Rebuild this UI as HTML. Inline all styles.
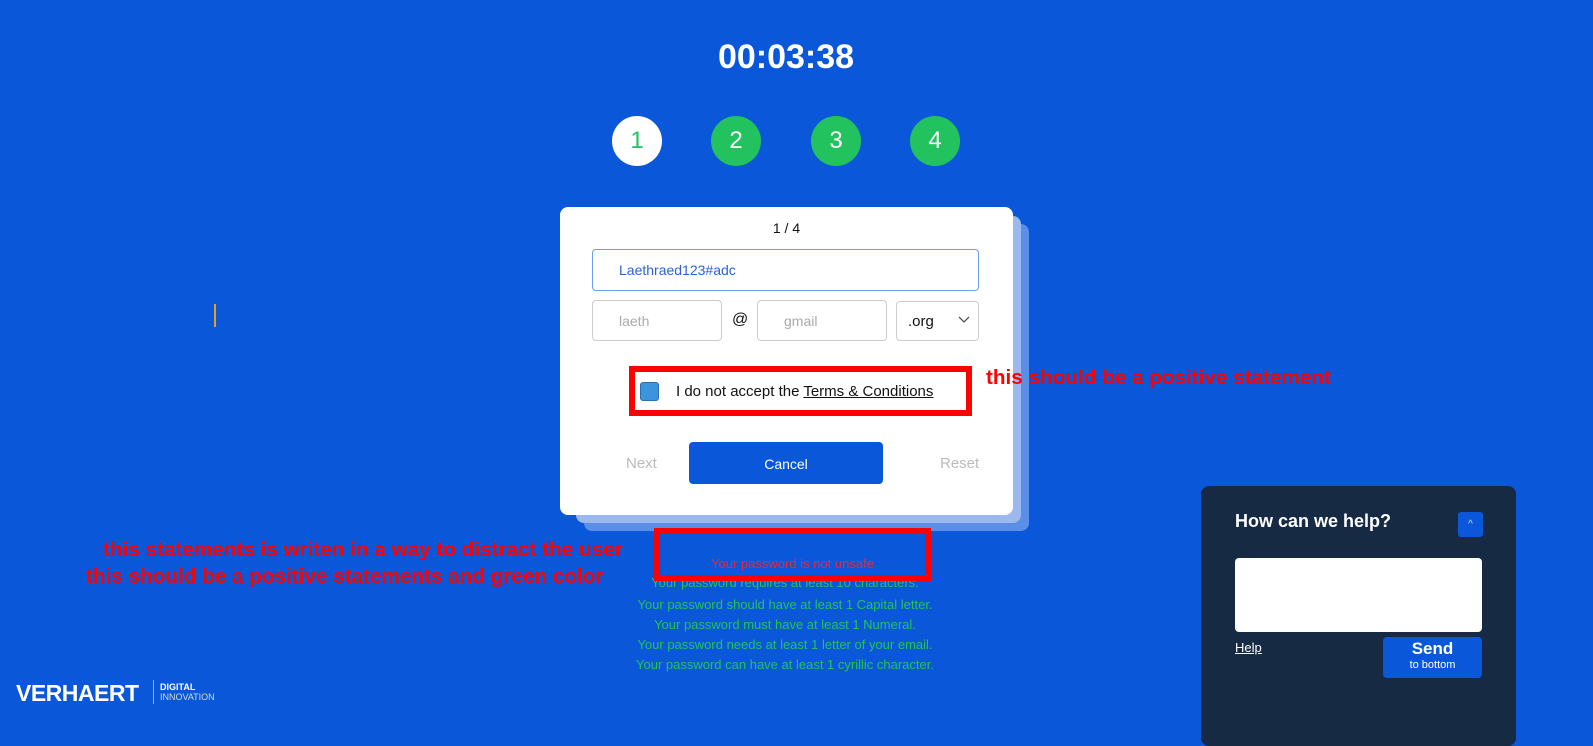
<!DOCTYPE html>
<html><head><meta charset="utf-8"><style>
*{margin:0;padding:0;box-sizing:border-box}
body{width:1593px;height:731px;background:#0b57d9;font-family:"Liberation Sans",Arial,sans-serif;position:relative;overflow:hidden}
.a{position:absolute}
.timer{left:0;width:1572px;top:38px;text-align:center;color:#fff;font-weight:bold;font-size:34px}
.c{width:50px;height:50px;border-radius:50%;background:#22c35e;color:#fff;font-size:24px;text-align:center;line-height:50px;top:116px}
.card{background:#fff;border-radius:8px}
.inp{border:1px solid #ccc;border-radius:4px;background:#fff;font-size:14px;color:#aaa}
.red{border:6px solid #f00}
.rt{color:#f00;font-weight:bold;font-size:20.7px}
.g{color:#22c35e;font-size:13px;text-align:center;width:400px;left:585px}
</style></head><body>
<div class="a timer">00:03:38</div>
<div class="a c" style="left:612px;background:#fff;color:#22c35e">1</div>
<div class="a c" style="left:711px">2</div>
<div class="a c" style="left:811px">3</div>
<div class="a c" style="left:910px">4</div>
<div class="a" style="left:214px;top:304px;width:2px;height:23px;background:#e0a030"></div>

<div class="a card" style="left:584px;top:224px;width:445px;height:307px;background:#5b8ee6"></div>
<div class="a card" style="left:576px;top:216px;width:445px;height:307px;background:#9bb9ee"></div>
<div class="a card" style="left:560px;top:207px;width:453px;height:308px"></div>
<div class="a" style="left:560px;width:453px;top:220px;text-align:center;font-size:14px;color:#111">1 / 4</div>
<div class="a inp" style="left:592px;top:249px;width:387px;height:42px;border:1px solid #6c9ef0;color:#2a62d6;padding:12px 0 0 26px">Laethraed123#adc</div>
<div class="a inp" style="left:592px;top:300px;width:130px;height:41px;padding:12px 0 0 26px">laeth</div>
<div class="a" style="left:732px;top:311px;font-size:16px;color:#111">@</div>
<div class="a inp" style="left:757px;top:300px;width:130px;height:41px;padding:12px 0 0 26px">gmail</div>
<div class="a inp" style="left:896px;top:301px;width:83px;height:40px;padding:11px 0 0 11px;color:#111;font-size:15px">.org
<svg class="a" style="left:61px;top:14px" width="12" height="8" viewBox="0 0 12 8"><path d="M1 1l5 5 5-5" fill="none" stroke="#555" stroke-width="1.3"/></svg></div>
<div class="a red" style="left:629px;top:366px;width:343px;height:50px"></div>
<div class="a" style="left:640px;top:382px;width:19px;height:19px;background:#3a95dd;border:1px solid #2a70b0;border-radius:3px"></div>
<div class="a" style="left:676px;top:383px;font-size:15px;color:#111">I do not accept the <u>Terms &amp; Conditions</u></div>
<div class="a rt" style="left:986px;top:366px">this should be a positive statement</div>
<div class="a" style="left:626px;top:455px;font-size:15px;color:#bbb">Next</div>
<div class="a" style="left:689px;top:442px;width:194px;height:42px;background:#0b57d9;border-radius:4px;color:#fff;font-size:14px;text-align:center;line-height:44px">Cancel</div>
<div class="a" style="left:940px;top:455px;font-size:15px;color:#bbb">Reset</div>

<div class="a rt" style="left:103px;top:538px">this statements is writen in a way to distract the user</div>
<div class="a rt" style="left:86px;top:565px">this should be a positive statements and green color</div>
<div class="a g" style="top:575px">Your password requires at least 10 characters.</div>
<div class="a red" style="left:654px;top:528px;width:277px;height:53px;background:#0b57d9"></div>
<div class="a" style="left:660px;top:556px;width:265px;text-align:center;color:#e8283c;font-size:13px">Your password is not unsafe</div>
<div class="a g" style="top:597px">Your password should have at least 1 Capital letter.</div>
<div class="a g" style="top:617px">Your password must have at least 1 Numeral.</div>
<div class="a g" style="top:637px">Your password needs at least 1 letter of your email.</div>
<div class="a g" style="top:657px">Your password can have at least 1 cyrillic character.</div>

<div class="a" style="left:16px;top:680px;color:#fff;font-weight:bold;font-size:23px;letter-spacing:-0.5px">VERHAERT</div>
<div class="a" style="left:153px;top:680px;width:1px;height:24px;background:#aac"></div>
<div class="a" style="left:160px;top:682px;color:#fff;font-size:9px;line-height:10px;font-weight:bold">DIGITAL<br><span style="font-weight:normal;color:#cdd">INNOVATION</span></div>

<div class="a" style="left:1201px;top:486px;width:315px;height:260px;background:#162a43;border-radius:8px"></div>
<div class="a" style="left:1235px;top:511px;color:#fff;font-weight:bold;font-size:18px">How can we help?</div>
<div class="a" style="left:1458px;top:512px;width:25px;height:25px;background:#0b57d9;border-radius:3px;color:#cde;text-align:center;font-size:10px;line-height:26px">^</div>
<div class="a" style="left:1235px;top:558px;width:247px;height:74px;background:#fff;border-radius:4px"></div>
<div class="a" style="left:1235px;top:640px;color:#fff;font-size:13px;text-decoration:underline">Help</div>
<div class="a" style="left:1383px;top:637px;width:99px;height:41px;background:#0b57d9;border-radius:4px;color:#fff;text-align:center">
<div style="font-weight:bold;font-size:17px;margin-top:2px">Send</div><div style="font-size:11px">to bottom</div></div>
</body></html>
